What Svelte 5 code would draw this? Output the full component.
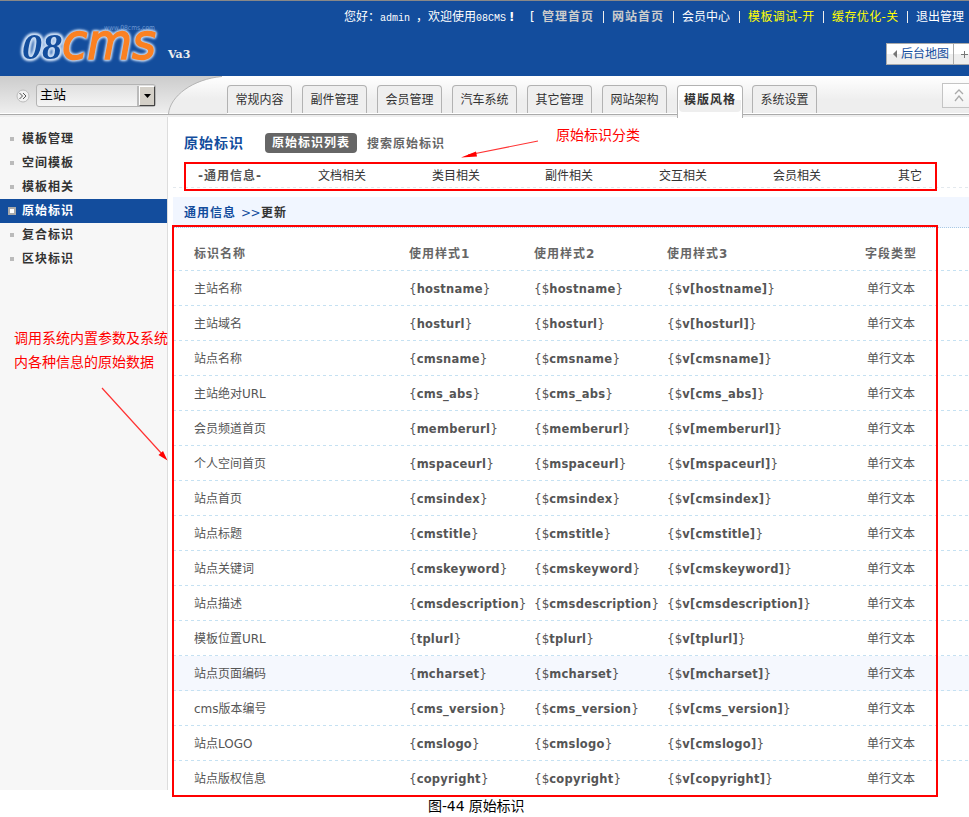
<script>
  const tabs = ['常规内容', '副件管理', '会员管理', '汽车系统', '其它管理', '网站架构', '模版风格', '系统设置'];
  const side = ['模板管理', '空间模板', '模板相关', '原始标识', '复合标识', '区块标识'];
  const cats = [
    ['文档相关', 114], ['类目相关', 113], ['副件相关', 114],
    ['交互相关', 114], ['会员相关', 125], ['其它', 24]
  ];
  const links = [
    ['管理首页', 61, 'bold'], ['网站首页', 61, 'bold'], ['会员中心', 57, ''],
    ['模板调试-开', 75, 'yellow'], ['缓存优化-关', 75, 'yellow'], ['退出管理', 53, '']
  ];
  const rows = [
    ['主站名称', 'hostname'], ['主站域名', 'hosturl'], ['站点名称', 'cmsname'],
    ['主站绝对URL', 'cms_abs'], ['会员频道首页', 'memberurl'], ['个人空间首页', 'mspaceurl'],
    ['站点首页', 'cmsindex'], ['站点标题', 'cmstitle'], ['站点关键词', 'cmskeyword'],
    ['站点描述', 'cmsdescription'], ['模板位置URL', 'tplurl'], ['站点页面编码', 'mcharset'],
    ['cms版本编号', 'cms_version'], ['站点LOGO', 'cmslogo'], ['站点版权信息', 'copyright']
  ];
</script>

<div class="page">
  <header>
    <div class="brand">
      <svg class="logo" width="150" height="46" viewBox="0 0 150 46">
        <text class="url" x="87" y="9" textLength="51" lengthAdjust="spacingAndGlyphs">www.08cms.com</text>
        <g class="wordmark">
          <text class="digits" x="5" y="38" textLength="40" lengthAdjust="spacingAndGlyphs">08</text>
          <text class="letters" x="45" y="38" textLength="94" lengthAdjust="spacingAndGlyphs">cms</text>
        </g>
      </svg>
      <span class="version">Va3</span>
    </div>
    <div class="top">
      <div class="user">
        <span class="hello">您好：<i>admin</i></span>
        <span class="welcome">，欢迎使用<i>08CMS</i><b>!</b></span>
        <span class="bracket">[</span>
        {#each links as [label, width, kind], n}
          <span class="link {kind}" style="width:{width}px">{label}</span>
          {#if n < 5}<span class="sep"></span>{/if}
        {/each}
      </div>
      <div class="map">
        <span class="maplink"><svg width="5" height="8"><path d="M5 0V8L1 4Z" fill="#777" /></svg>后台地图</span>
        <span class="plus"><svg width="9" height="9"><path d="M4.500 1V8M1 4.500H8" stroke="#777" /></svg></span>
      </div>
    </div>
  </header>

  <nav>
    <div class="site">
      <svg class="chev" width="14" height="14"><circle cx="7" cy="7" r="6" fill="#f1f1f1" stroke="#bcbcbc" /><path d="M3.500 4L6.500 7L3.500 10M7 4L10 7L7 10" fill="none" stroke="#555" /></svg>
      <div class="select"><span>主站</span><div class="drop"><svg width="7" height="4"><path d="M0 0H7L3.500 4Z" /></svg></div></div>
    </div>
    <div class="curve">
      <svg width="59" height="38"><path d="M.5 38C2 20 25 3 55 .5H59V38Z" fill="url(#bar)" /><path d="M.5 38C2 20 25 3 54 .5" fill="none" stroke="#b5b5b5" /><defs><linearGradient id="bar" x2="0" y2="1"><stop stop-color="#fff" /><stop offset=".6" stop-color="#eee" /><stop offset="1" stop-color="#eee" /></linearGradient></defs></svg>
    </div>
    <div class="tabs">
      {#each tabs as t, n}<div class="tab" class:active={n === 6}><span>{t}</span></div>{/each}
    </div>
    <div class="up"><svg width="12" height="14"><path d="M2 6L6 2L10 6M2 13L6 8L10 13" fill="none" stroke="#aaa" stroke-width="1.300" /></svg></div>
  </nav>

  <div class="body">
    <aside>
      {#each side as s, n}<div class="item" class:on={n === 3}><i></i>{s}</div>{/each}
      <p class="note">调用系统内置参数及系统<br />内各种信息的原始数据</p>
    </aside>
    <main>
      <div class="heading"><h1>原始标识</h1><span class="pill">原始标识列表</span><span class="search">搜索原始标识</span></div>
      <div class="cats">
        <b>-通用信息-</b>
        {#each cats as [label, width]}<span style="width:{width}px">{label}</span>{/each}
      </div>
      <div class="band"><b>通用信息</b><span>&gt;&gt;</span><em>更新</em></div>
      <div class="row head"><span>标识名称</span><span>使用样式1</span><span>使用样式2</span><span>使用样式3</span><span class="type">字段类型</span></div>
      {#each rows as [name, key], n}
        <div class="row" class:hover={n === 11}>
          <span>{name}</span>
          <span>&#123;<b>{key}</b>&#125;</span>
          <span>&#123;$<b>{key}</b>&#125;</span>
          <span>&#123;$<b>v[{key}]</b>&#125;</span>
          <span class="type">单行文本</span>
        </div>
      {/each}
    </main>
  </div>
  <footer>图-44 原始标识</footer>

  <div class="frame cat-frame"></div>
  <div class="frame table-frame"></div>
  <span class="callout">原始标识分类</span>
  <svg class="arrows" width="969" height="817">
    <path d="M538 141L468 155M102 388L162 454" stroke="#f33" stroke-width="1.200" />
    <path d="M461 157.500L476 151.500L477 156.500ZM167.500 460.500L158.500 455L163 451Z" fill="red" />
  </svg>
</div>

<style>
  :global(body) { margin: 0; background: #fff; }
  .page { position: relative; width: 969px; height: 817px; overflow: hidden; font: 12px/24px "DejaVu Sans", "Noto Sans CJK SC", sans-serif; color: #333; white-space: nowrap; }
  .page * { box-sizing: border-box; }
  i, em { font-style: normal; }
  header { height: 76px; background: #134d9d; border-top: 1px solid #888; display: flex; color: #fff; }
  .brand { width: 344px; display: flex; align-items: flex-start; padding: 20px 0 0 17px; }
  .logo { overflow: visible; }
  .url { font: 7px "DejaVu Sans", sans-serif; fill: #6c98d2; }
  .wordmark { filter: drop-shadow(0 0 1px #c5d9f2) drop-shadow(0 0 1px #c5d9f2) drop-shadow(0 0 1px #a5c1e8); }
  .digits { font: italic bold 36px "Liberation Serif", serif; fill: #134d9d; stroke: #c5d9f2; stroke-width: 2px; paint-order: stroke; }
  .letters { font: italic 49px "DejaVu Sans", sans-serif; fill: #fb8122; stroke: #fb8122; stroke-width: 1.500px; }
  .version { font: bold 11px/20px "DejaVu Serif", serif; margin: 24px 0 0 1px; color: #eee; }
  .top { flex: 1; display: flex; flex-direction: column; align-items: flex-end; }
  .user { display: flex; align-items: center; height: 32px; width: 625px; }
  .user i { font: 10px "Liberation Mono", monospace; }
  .hello { width: 72px; }
  .welcome { width: 114px; }
  .welcome b { padding-left: 3px; }
  .bracket { width: 12px; }
  .bold { font-weight: bold; letter-spacing: 1px; color: #ccc; }
  .yellow { color: #ff0; }
  .yellow { letter-spacing: .4px; }
  .sep { width: 1px; height: 12px; background: #eee; margin-right: 8px; }
  .map { display: flex; width: 83px; height: 22px; margin-top: 10px; border: 1px solid #aaa; border-right: 0; background: linear-gradient(#fff 50%, #eee 50%); color: #134d9d; line-height: 20px; }
  .maplink { display: flex; align-items: center; gap: 4px; width: 68px; padding-left: 5px; border-right: 1px solid #aaa; }
  .plus { display: flex; align-items: center; padding-left: 6px; }

  nav { height: 41px; display: flex; background: linear-gradient(#fff, #eee 24px, #eee 37px, #fff 37px, #fff 38px, #aaa 38px, #aaa 39px, #eee 39px, #eee 41px); }
  .site { width: 168px; height: 38px; display: flex; padding: 8px 0 0 16px; background: linear-gradient(#ccc, #eee 37px, #fff 37px); }
  .chev { margin: 5px 6px 0 0; }
  .select { display: flex; justify-content: space-between; width: 120px; height: 23px; border: 1px solid #b4b4b4; border-radius: 3px; background: linear-gradient(#e0e0e0, #f5f5f5); font-size: 13px; line-height: 19px; color: #000; padding-left: 3px; }
  .drop { display: flex; align-items: center; justify-content: center; width: 16px; height: 20px; margin-top: 1px; background: #d4d0c8; border: 1px solid #fff; border-right: 1px solid #444; border-bottom: 1px solid #444; box-shadow: -2px 0 #bbb; }
  .curve { flex: none; width: 59px; height: 37px; line-height: 0; background: linear-gradient(90deg, #0000 54px, #fff 54px), linear-gradient(#ccc, #eee 37px); }
  .tabs { display: flex; gap: 10px; padding-top: 9px; width: 715px; }
  .tab { width: 65px; height: 28px; border: 1px solid #b2b2b2; border-bottom: 0; border-radius: 4px 4px 0 0; background: #efefef; text-align: center; line-height: 29px; }
  .active { height: 33px; width: 66px; margin-right: -1px; background: #fff; font-weight: bold; letter-spacing: 1px; padding: 2px 1px; }
  .active span { display: block; height: 24px; line-height: 25px; border-radius: 4px; background: linear-gradient(#fff 50%, #eee 50%); }
  .up { width: 27px; height: 25px; margin-top: 7px; border: 1px solid #c4c4c4; border-right: 0; background: linear-gradient(#fff, #f2f2f2); padding: 4px 0 0 10px; line-height: 0; }

  .body { display: flex; height: 680px; }
  aside { width: 168px; height: 673px; padding-top: 10px; background: linear-gradient(#f7f7f7, #f7f7f7) padding-box; border-right: 1px solid #ddd; }
  .item { display: flex; align-items: center; height: 24px; padding-left: 10px; font-weight: bold; letter-spacing: 1px; }
  .item i { width: 4px; height: 4px; background: #bbb; margin-right: 8px; }
  .on { background: #134d9d; color: #fff; padding-left: 8px; }
  .on i { width: 8px; height: 8px; border: 2px solid #aaa; background: #fff; margin-right: 6px; }
  .note { margin: 55px 0 0 14px; color: #f00; font-size: 14px; line-height: 24px; }
  main { flex: 1; padding: 10px 0 0 5px; }
  .heading { display: flex; align-items: center; height: 32px; padding-left: 11px; }
  h1 { margin: 0; width: 81px; font-size: 14px; letter-spacing: 1px; color: #134d9d; }
  .pill { width: 92px; height: 20px; padding-left: 7px; border-radius: 4px; background: #666; color: #fff; font-weight: bold; letter-spacing: 1px; line-height: 21px; }
  .search { margin-left: 10px; padding-top: 1px; font-weight: bold; letter-spacing: 1px; color: #666; }
  .cats { display: flex; height: 29px; padding-left: 25px; line-height: 35px; background: repeating-linear-gradient(90deg, #e3e9ee 0 3px, transparent 3px 6px) 0 100% / 100% 1px no-repeat; }
  .cats b { width: 120px; color: #555; letter-spacing: 1px; }
  .band { display: flex; height: 31px; margin-top: 9px; padding-left: 11px; line-height: 32px; background: #f1f6ff; border-bottom: 1px dotted #a9c9e4; color: #134d9d; }
  .band b, .band em { font-weight: bold; letter-spacing: 1px; }
  .band b { width: 57px; }
  .band span { width: 20px; letter-spacing: -.5px; }
  .band em { color: #333; }
  .row { display: grid; grid-template-columns: 215px 125px 133px 174px 1fr; height: 35px; padding-left: 21px; line-height: 36px; color: #555; background: repeating-linear-gradient(90deg, #c5e1f2 0 3px, transparent 3px 6px) 0 100% / 100% 1px no-repeat; }
  .row b { font-size: 11.500px; letter-spacing: .25px; }
  .row .type { width: 100px; text-align: center; }
  .head { height: 43px; line-height: 53px; font-weight: bold; letter-spacing: 1px; color: #666; }
  .row:last-child { background: none; }
  .hover { background-color: #f5f8fe; }
  footer { padding-left: 428px; height: 20px; line-height: 18px; font-size: 14px; letter-spacing: -.1px; color: #000; }
  .frame { position: absolute; border: 2px solid #f00; }
  .cat-frame { left: 184px; top: 162px; width: 753px; height: 29px; }
  .table-frame { left: 172px; top: 225px; width: 766px; height: 572px; }
  .callout { position: absolute; left: 556px; top: 123px; font-size: 14px; color: #f00; }
  .arrows { position: absolute; left: 0; top: 0; pointer-events: none; }
</style>
